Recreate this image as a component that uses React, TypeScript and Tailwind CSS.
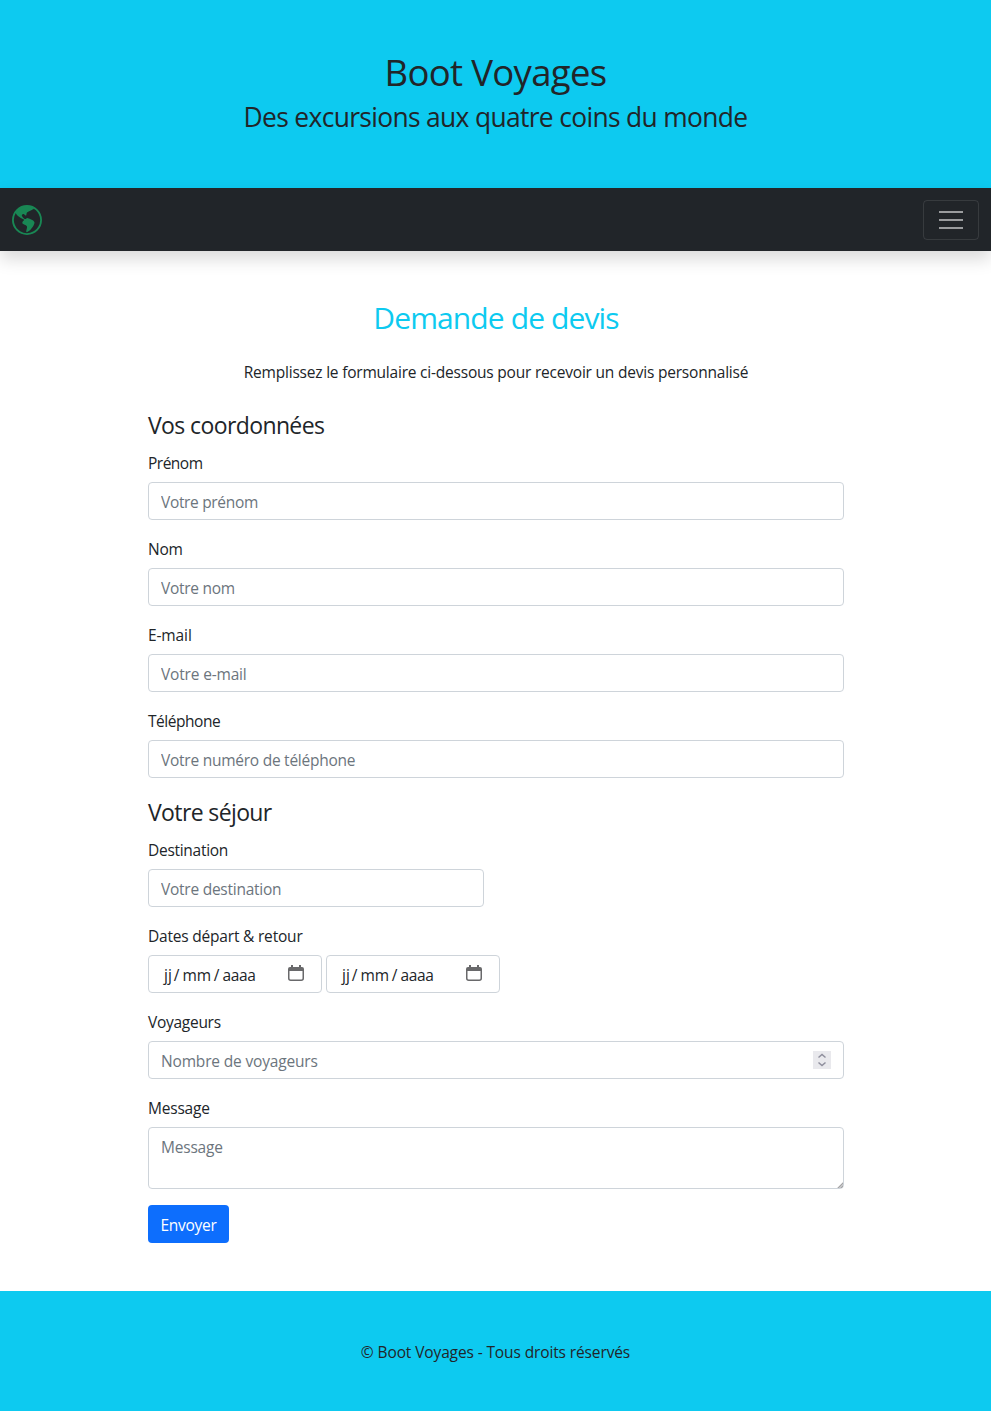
import { BsGlobeAmericas } from "react-icons/bs";

const control =
  "h-[38px] rounded border border-[#ced4da] bg-white px-3 pt-[2px] text-[15.5px] leading-6 text-[#212529] placeholder:text-[#6c757d] placeholder:opacity-100 outline-none";

function Field({ label, placeholder, narrow, spacing, labelSpacing }: { label: string; placeholder: string; narrow?: boolean; spacing: string; labelSpacing: string }) {
  return (
    <div className="mb-4 flex flex-col gap-2">
      <label className={`h-6 pt-px ${labelSpacing}`}>{label}</label>
      <input className={`${control} ${narrow ? "w-[336px]" : "w-full"} ${spacing}`} placeholder={placeholder} />
    </div>
  );
}

function DateBox() {
  return (
    <div className="flex h-[38px] w-[174px] items-center justify-between rounded border border-[#ced4da] pr-[17px] pl-[15px]">
      <span className="flex gap-[3px] pt-[2px]">
        <span className="-mr-px">jj</span><span>/</span><span className="tracking-[-0.2px]">mm</span><span>/</span><span className="tracking-[-0.4px]">aaaa</span>
      </span>
      <svg className="-mt-[3px]" width="16" height="16" viewBox="0 0 16 16" fill="none">
        <path d="M3 0h2v2h6V0h2v2h1a2 2 0 0 1 2 2v2H0V4a2 2 0 0 1 2-2h1z" fill="#69696b" />
        <path d="M.75 5v8.25a2 2 0 0 0 2 2h10.5a2 2 0 0 0 2-2V5" stroke="#69696b" strokeWidth="1.5" />
      </svg>
    </div>
  );
}

export default function App() {
  return (
    <div className="min-h-[1411px] bg-white font-['Open_Sans',sans-serif] text-[15.5px] leading-6 text-[#212529]">
      <header className="flex h-[188px] flex-col items-center gap-2 bg-[#0dcaf0] pt-12">
        <h1 className="pt-1 text-[36.5px] leading-10 tracking-[-0.67px] whitespace-nowrap">Boot Voyages</h1>
        <h2 className="pt-px text-[26.4px] leading-8 tracking-[-0.66px] whitespace-nowrap">Des excursions aux quatre coins du monde</h2>
      </header>
      <nav className="relative flex h-[63px] items-center justify-between bg-[#212529] px-3 shadow-[0_8px_16px_rgba(0,0,0,0.15)]">
        <BsGlobeAmericas size={30} color="#198754" />
        <button className="flex h-10 w-14 items-center justify-center rounded border border-white/10" aria-label="Menu">
          <svg width="30" height="30" viewBox="0 0 30 30" stroke="white" strokeOpacity=".55" strokeWidth="2">
            <path d="M3 7h24M3 15h24M3 23h24" />
          </svg>
        </button>
      </nav>
      <main className="h-[1040px] pt-12 pr-[147px] pl-[148px]">
        <h2 className="mb-6 h-9 pt-px text-center text-[30px] leading-9 tracking-[-0.88px] text-[#0dcaf0]">Demande de devis</h2>
        <p className="mb-6 h-6 pt-px text-center tracking-[-0.21px]">Remplissez le formulaire ci-dessous pour recevoir un devis personnalisé</p>
        <h3 className="mb-2 h-[35px] pt-px text-[23px] leading-[35px] tracking-[-0.61px]">Vos coordonnées</h3>
        <Field label="Prénom" placeholder="Votre prénom" spacing="placeholder:tracking-[-0.33px]" labelSpacing="tracking-[-0.5px]" />
        <Field label="Nom" placeholder="Votre nom" spacing="placeholder:tracking-[-0.27px]" labelSpacing="tracking-[-0.25px]" />
        <Field label="E-mail" placeholder="Votre e-mail" spacing="placeholder:tracking-[-0.17px]" labelSpacing="tracking-[-0.12px]" />
        <Field label="Téléphone" placeholder="Votre numéro de téléphone" spacing="placeholder:tracking-[-0.25px]" labelSpacing="tracking-[-0.47px]" />
        <h3 className="mb-2 h-[35px] pt-px text-[23px] leading-[35px] tracking-[-0.62px]">Votre séjour</h3>
        <Field label="Destination" placeholder="Votre destination" narrow spacing="placeholder:tracking-[-0.25px]" labelSpacing="tracking-[-0.28px]" />
        <div className="mb-4 flex flex-col gap-2">
          <label className="h-6 pt-px tracking-[-0.2px]">Dates départ &amp; retour</label>
          <div className="flex gap-1"><DateBox /><DateBox /></div>
        </div>
        <div className="mb-4 flex flex-col gap-2">
          <label className="h-6 pt-px tracking-[-0.28px]">Voyageurs</label>
          <div className="flex h-[38px] items-center justify-between rounded border border-[#ced4da] px-3">
            <span className="pt-[2px] tracking-[-0.17px] text-[#6c757d]">Nombre de voyageurs</span>
            <span className="flex size-[18px] items-center justify-center bg-[#e9e9ed]">
              <svg width="10" height="14" viewBox="0 0 10 14" fill="none" stroke="#8f8f9d" strokeWidth="1.5">
                <path d="M1.5 4.5 5 1.5l3.5 3M1.5 9.5l3.5 3 3.5-3" />
              </svg>
            </span>
          </div>
        </div>
        <div className="mb-4 flex flex-col gap-2">
          <label className="h-6 pt-px tracking-[-0.2px]">Message</label>
          <div className="relative">
            <textarea className="block h-[62px] w-full resize-none rounded border border-[#ced4da] px-3 py-[7px] outline-none placeholder:tracking-[-0.2px] placeholder:text-[#6c757d] placeholder:opacity-100" placeholder="Message" />
            <svg className="absolute right-px bottom-px" width="6" height="6" viewBox="0 0 6 6">
              <path d="M6 0v5L5 6H0z" fill="#c4c4c6" />
              <path d="M1 6l5-5M4 6l2-2" stroke="#8f8f91" strokeWidth=".6" />
            </svg>
          </div>
        </div>
        <button className="h-[38px] w-[81px] rounded bg-[#0d6efd] pt-[2px] tracking-[-0.3px] text-white">Envoyer</button>
      </main>
      <footer className="flex h-[120px] items-center justify-center bg-[#0dcaf0] pt-[2px] tracking-[-0.12px]">© Boot Voyages - Tous droits réservés</footer>
    </div>
  );
}
